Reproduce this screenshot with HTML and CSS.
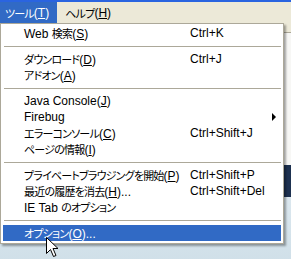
FILE: index.html
```html
<!DOCTYPE html>
<html lang="ja">
<head>
  <meta charset="UTF-8">
  <meta name="viewport" content="width=device-width, initial-scale=1.0">
  <title>ツール メニュー</title>
  <link rel="stylesheet" href="styles.css">
</head>
<body>
  <div class="screen">
    <div class="title-edge"></div>
    <div class="menubar">
      <span class="menubar-item is-open"><span class="ja">ツール</span>(<u>T</u>)</span>
      <span class="menubar-item"><span class="ja">ヘルプ</span>(<u>H</u>)</span>
    </div>
    <div class="page">
      <div class="toolbar"></div>
      <div class="page-body"></div>
      <div class="page-banner"></div>
      <div class="page-bg"></div>
    </div>

    <ul class="menu">
      <li class="menu-item"><span>Web <span class="ja">検索</span>(<u>S</u>)</span><span>Ctrl+K</span></li>
      <li class="menu-sep"></li>
      <li class="menu-item"><span><span class="ja">ダウンロード</span>(<u>D</u>)</span><span>Ctrl+J</span></li>
      <li class="menu-item"><span><span class="ja">アドオン</span>(<u>A</u>)</span></li>
      <li class="menu-sep"></li>
      <li class="menu-item"><span>Java Console(<u>J</u>)</span></li>
      <li class="menu-item"><span>Firebug</span><span></span><i class="sub-arrow"></i></li>
      <li class="menu-item"><span><span class="ja">エラーコンソール</span>(<u>C</u>)</span><span>Ctrl+Shift+J</span></li>
      <li class="menu-item"><span><span class="ja">ページの情報</span>(<u>I</u>)</span></li>
      <li class="menu-sep"></li>
      <li class="menu-item"><span><span class="ja">プライベートブラウジングを開始</span>(<u>P</u>)</span><span>Ctrl+Shift+P</span></li>
      <li class="menu-item"><span><span class="ja">最近の履歴を消去</span>(<u>H</u>)...</span><span>Ctrl+Shift+Del</span></li>
      <li class="menu-item"><span>IE Tab <span class="ja">のオプション</span></span></li>
      <li class="menu-sep"></li>
      <li class="menu-item is-hot"><span><span class="ja">オプション</span>(<u>O</u>)...</span></li>
    </ul>

    <svg class="cursor" width="13" height="21" viewBox="0 0 13 21">
      <path d="M0.5 0.5 L0.5 16.5 L4.5 12.5 L7.5 19.5 L10 18.5 L7 11.5 L12 11.5 Z" fill="#fff" stroke="#000" stroke-width="1"/>
    </svg>
  </div>
</body>
</html>
```

FILE: styles.css
```css
body {
  margin: 0;
  font-family: "Liberation Sans", "Noto Sans CJK JP", sans-serif;
  font-size: 12px;
  color: #000;
  overflow: hidden;
}

.screen {
  position: relative;
  width: 291px;
  height: 259px;
  overflow: hidden;
  background: #d6e4ec;
}

.ja {
  font-size: 11px;
  font-feature-settings: "palt";
  letter-spacing: -0.8px;
}

.title-edge {
  height: 2px;
  background: #2a64e0;
}

.menubar {
  display: flex;
  height: 21px;
  background: #ece9d8;
}

.menubar-item {
  display: flex;
  align-items: center;
  padding: 0 8px 0 5px;
}

.menubar-item + .menubar-item {
  padding-left: 8px;
}

.menubar-item.is-open {
  background: #316ac5;
  color: #fff;
}

.page {
  display: flex;
  flex-direction: column;
}

.toolbar {
  height: 9px;
  background: #ece9d8;
  border-bottom: 1px solid #aca899;
}

.page-body {
  height: 132px;
  background: #f7f7f5;
}

.page-banner {
  height: 32px;
  background: #1d3150;
}

.page-bg {
  height: 70px;
  background: linear-gradient(180deg, #dbe7ee, #cfdfe8);
}

/* popup */
.menu {
  position: absolute;
  top: 23px;
  left: 0;
  width: 278px;
  margin: 0;
  padding: 1px 2px 2px;
  list-style: none;
  background: #fff;
  border: 1px solid #aca899;
  box-shadow: 2px 2px 2px rgba(0, 0, 0, 0.35);
}

.menu-item {
  display: grid;
  grid-template-columns: 166px 1fr 9px;
  align-items: center;
  height: 16px;
  padding-left: 21px;
  white-space: nowrap;
}

.menu-item.is-hot {
  background: #316ac5;
  color: #fff;
}

.menu-sep {
  height: 1px;
  margin: 5px 0 4px 1px;
  background: #aca899;
}

.sub-arrow {
  width: 0;
  height: 0;
  border-top: 4px solid transparent;
  border-bottom: 4px solid transparent;
  border-left: 4px solid #000;
}

.cursor {
  position: absolute;
  left: 46px;
  top: 237px;
}
```
